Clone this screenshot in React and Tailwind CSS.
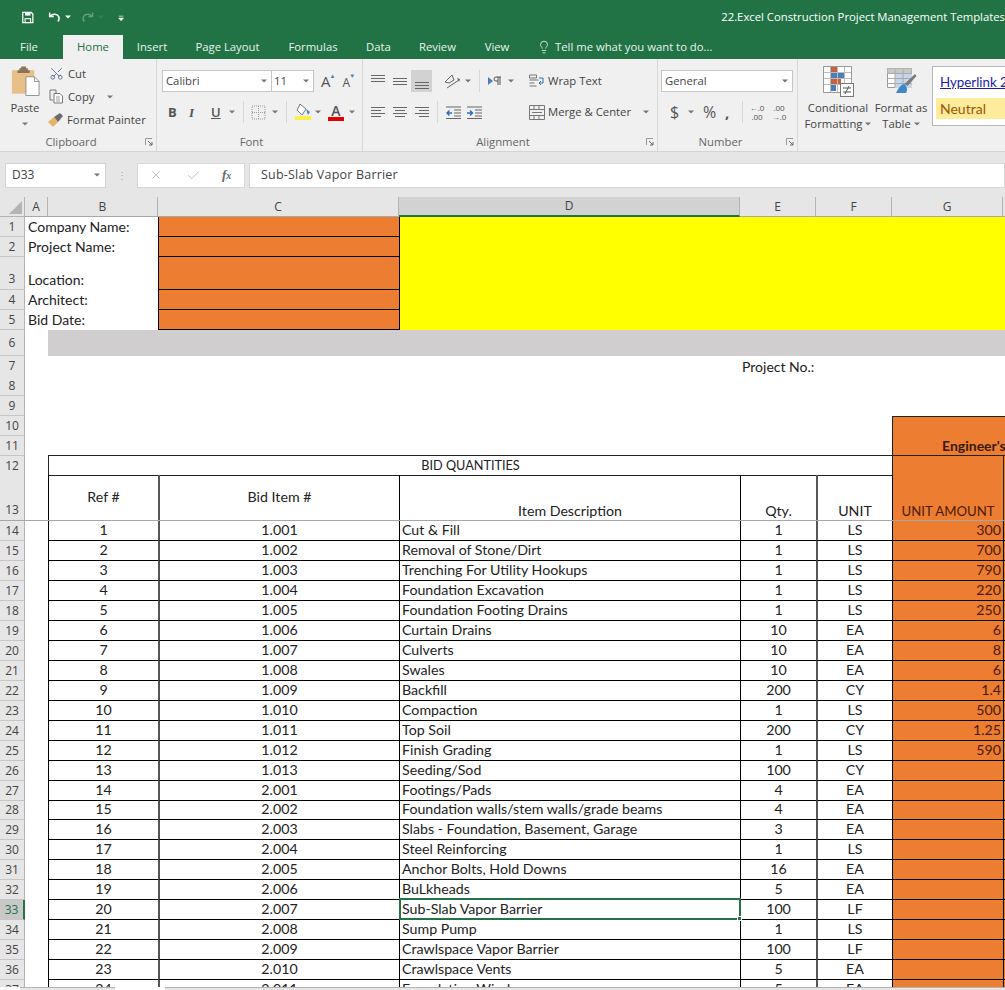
import { Scissors, Lightbulb, X, Check } from 'lucide-react';

const UI = "font-['Open_Sans','Noto_Sans',sans-serif]";
const SHEET = "font-['Lato','Carlito',sans-serif]";
const COLS = 'grid grid-cols-[25px_23px_110px_241px_341px_76px_76px_111px_2px]';

const rows = [
    [1, '1.001', 'Cut & Fill', 1, 'LS', '300'],
    [2, '1.002', 'Removal of Stone/Dirt', 1, 'LS', '700'],
    [3, '1.003', 'Trenching For Utility Hookups', 1, 'LS', '790'],
    [4, '1.004', 'Foundation Excavation', 1, 'LS', '220'],
    [5, '1.005', 'Foundation Footing Drains', 1, 'LS', '250'],
    [6, '1.006', 'Curtain Drains', 10, 'EA', '6'],
    [7, '1.007', 'Culverts', 10, 'EA', '8'],
    [8, '1.008', 'Swales', 10, 'EA', '6'],
    [9, '1.009', 'Backfill', 200, 'CY', '1.4'],
    [10, '1.010', 'Compaction', 1, 'LS', '500'],
    [11, '1.011', 'Top Soil', 200, 'CY', '1.25'],
    [12, '1.012', 'Finish Grading', 1, 'LS', '590'],
    [13, '1.013', 'Seeding/Sod', 100, 'CY', ''],
    [14, '2.001', 'Footings/Pads', 4, 'EA', ''],
    [15, '2.002', 'Foundation walls/stem walls/grade beams', 4, 'EA', ''],
    [16, '2.003', 'Slabs - Foundation, Basement, Garage', 3, 'EA', ''],
    [17, '2.004', 'Steel Reinforcing', 1, 'LS', ''],
    [18, '2.005', 'Anchor Bolts, Hold Downs', 16, 'EA', ''],
    [19, '2.006', 'BuLkheads', 5, 'EA', ''],
    [20, '2.007', 'Sub-Slab Vapor Barrier', 100, 'LF', ''],
    [21, '2.008', 'Sump Pump', 1, 'LS', ''],
    [22, '2.009', 'Crawlspace Vapor Barrier', 100, 'LF', ''],
    [23, '2.010', 'Crawlspace Vents', 5, 'EA', ''],
    [24, '2.011', 'Foundation Windows', 5, 'EA', ''],
];

const Caret = ({ className = '' }) => (
    <svg width="6" height="4" viewBox="0 0 6 4" className={`shrink-0 ${className}`}>
        <path d="M0 0.5h6L3 3.5z" fill="#777" />
    </svg>
);

const Launcher = () => (
    <svg width="8" height="8" viewBox="0 0 8 8" className="absolute right-[3px] bottom-[5px]">
        <path d="M0.5 7V0.5H7" fill="none" stroke="#999" />
        <path d="M3 3l4 4M4 7h3V4" fill="none" stroke="#666" />
    </svg>
);

const Lines = ({ rows: ls }) => (
    <svg width="16" height="14" viewBox="0 0 16 14">
        {ls.map(([x, y, w], i) => <rect key={i} x={x} y={y} width={w} height="1" fill="#666" />)}
    </svg>
);

const Group = ({ label, width, launcher, children, labelPad = 'pr-[14px]' }) => (
    <div className={`relative shrink-0 h-full ${width} border-r border-[#d8d8d8] flex flex-col`}>
        <div className="flex-1 min-h-0">{children}</div>
        <div className={`h-[19px] flex items-center justify-center text-[11.3px] text-[#666] leading-none ${labelPad}`}>{label}</div>
        {launcher && <Launcher />}
    </div>
);

const Sep = ({ className = 'mx-[6px]' }) => <div className={`w-px h-[22px] shrink-0 bg-[#d8d8d8] ${className}`} />;

const Clipboard = () => (
    <Group label="Clipboard" width="w-[157px]" launcher>
        <div className="flex pt-[7px] pl-[9px]">
            <div className="w-[32px] flex flex-col items-center">
                <svg width="30" height="30" viewBox="0 0 32 31">
                    <rect x="2" y="4" width="24" height="25" fill="#e6c088" />
                    <path d="M10 4V2h2V0h5v2h2v2h2v3H8V4z" fill="#8a7356" />
                    <path d="M17 11h9l5 5v15H17z" fill="#fff" stroke="#8d8d8d" />
                    <path d="M26 11v5h5" fill="none" stroke="#8d8d8d" />
                </svg>
                <span className="text-[11.3px] leading-none mt-[6px] text-[#444]">Paste</span>
                <Caret className="mt-[9px]" />
            </div>
            <div className="ml-[8px] flex flex-col text-[#444] text-[11.3px] leading-none gap-[6px] -mt-[1px]">
                <div className="h-[17px] flex items-center gap-[4px]">
                    <Scissors size={15} strokeWidth={1.4} className="text-[#556b8a] -rotate-90" />
                    <span>Cut</span>
                </div>
                <div className="h-[17px] flex items-center gap-[4px]">
                    <svg width="15" height="15" viewBox="0 0 15 15">
                        <path d="M1 1h6v3M1 1v10h3" fill="none" stroke="#777" />
                        <path d="M5 4.5h6l2.5 2.5v7H5z" fill="#fff" stroke="#777" />
                        <path d="M7 8h4M7 10h4M7 12h4" stroke="#999" />
                    </svg>
                    <span>Copy</span>
                    <Caret className="ml-[9px]" />
                </div>
                <div className="h-[17px] flex items-center gap-[3px] -ml-[1px]">
                    <svg width="16" height="15" viewBox="0 0 16 15">
                        <path d="M0 10l6-5 4 5-5 5z" fill="#e6b566" />
                        <path d="M6 5l6-4 3 3-5 6z" fill="#6b6b6b" />
                    </svg>
                    <span>Format Painter</span>
                </div>
            </div>
        </div>
    </Group>
);

const Font = () => (
    <Group label="Font" width="w-[206px]" labelPad="pr-[16px]">
        <div className="flex items-center pt-[11px] pl-[5px]">
            <div className="w-[110px] h-[22px] bg-white border border-[#c6c6c6] flex items-center justify-between pl-[3px] pr-[4px] text-[11.3px] text-[#444]">
                <span>Calibri</span><Caret />
            </div>
            <div className="w-[42px] h-[22px] bg-white border border-l-0 border-[#c6c6c6] flex items-center justify-between pl-[2px] pr-[4px] text-[11.3px] text-[#444]">
                <span>11</span><Caret />
            </div>
            <span className="ml-[7px] text-[15px] text-[#555] relative leading-none">A<span className="absolute -right-[5px] -top-[1px] text-[6px] text-[#4a7ebb]">▲</span></span>
            <span className="ml-[12px] mt-[3px] text-[12px] text-[#555] relative leading-none">A<span className="absolute -right-[5px] -top-[4px] text-[6px] text-[#4a7ebb]">▼</span></span>
        </div>
        <div className="flex items-center pt-[9px] pl-[11px] text-[#555] text-[13px] leading-none">
            <span className="font-bold w-[21px]">B</span>
            <span className="italic font-bold w-[22px] font-['Liberation_Serif',serif]">I</span>
            <span className="underline font-semibold w-[18px]">U</span>
            <Caret />
            <Sep className="ml-[8px] mr-[7px]" />
            <svg width="15" height="15" viewBox="0 0 15 15">
                <path d="M1 1h13v13H1zM7.5 1v13M1 7.5h13" fill="none" stroke="#999" strokeDasharray="1 1" />
            </svg>
            <Caret className="ml-[6px]" />
            <Sep className="ml-[8px] mr-[8px]" />
            <svg width="17" height="18" viewBox="0 0 17 18">
                <path d="M5 1l6 5-4 6-5-5z" fill="#fff" stroke="#777" />
                <path d="M11 6l4 3-2 3z" fill="#4a7ebb" />
                <rect x="0" y="13" width="16" height="4" fill="#f5f04a" />
            </svg>
            <Caret className="ml-[3px]" />
            <div className="ml-[7px] w-[16px] flex flex-col items-center">
                <span className="text-[14px] font-semibold leading-[13px] text-[#555]">A</span>
                <div className="w-[16px] h-[4px] bg-[#e00000]" />
            </div>
            <Caret className="ml-[5px]" />
        </div>
    </Group>
);

const Alignment = () => (
    <Group label="Alignment" width="w-[295px]" launcher>
        <div className="flex pl-[4px] pt-[11px]">
            <div className="w-[162px] flex flex-col">
                <div className="flex items-center h-[22px]">
                    <div className="w-[22px] flex justify-center"><Lines rows={[[1, 1, 14], [1, 4, 14], [1, 7, 14]]} /></div>
                    <div className="w-[22px] flex justify-center"><Lines rows={[[1, 4, 14], [1, 7, 14], [1, 10, 14]]} /></div>
                    <div className="w-[21px] h-[22px] bg-[#d2d2d2] flex justify-center items-end pb-[2px]"><Lines rows={[[1, 6, 14], [1, 9, 14], [1, 12, 14]]} /></div>
                    <svg width="18" height="16" viewBox="0 0 18 16" className="ml-[12px]">
                        <path d="M1 9l7-7 2 5-5 3zM3 15l12-8" fill="none" stroke="#666" />
                        <path d="M13 5l3 1-1 3z" fill="#666" />
                    </svg>
                    <Caret className="ml-[3px]" />
                    <Sep className="ml-[8px] mr-[8px]" />
                    <svg width="14" height="10" viewBox="0 0 14 10">
                        <path d="M0 1l5 4-5 4z" fill="#4a7ebb" />
                        <path d="M8 1h5M10 1v8M12 1v8M8 1a2 2 0 0 0 0 4h2" fill="none" stroke="#555" />
                    </svg>
                    <Caret className="ml-[6px]" />
                </div>
                <div className="flex items-center h-[22px] mt-[9px]">
                    <div className="w-[22px] flex justify-center"><Lines rows={[[1, 2, 14], [1, 5, 10], [1, 8, 14], [1, 11, 10]]} /></div>
                    <div className="w-[22px] flex justify-center"><Lines rows={[[1, 2, 14], [3, 5, 10], [1, 8, 14], [3, 11, 10]]} /></div>
                    <div className="w-[21px] flex justify-center"><Lines rows={[[1, 2, 14], [5, 5, 10], [1, 8, 14], [5, 11, 10]]} /></div>
                    <Sep className="ml-[5px] mr-[7px]" />
                    <svg width="17" height="13" viewBox="0 0 17 13">
                        <path d="M1 1h15M9 4h7M9 7h7M9 10h7M1 12.5h15" stroke="#666" />
                        <path d="M7 7H2M4.5 4.5L2 7l2.5 2.5" fill="none" stroke="#2f6fb3" strokeWidth="1.4" />
                    </svg>
                    <svg width="17" height="13" viewBox="0 0 17 13" className="ml-[4px]">
                        <path d="M1 1h15M9 4h7M9 7h7M9 10h7M1 12.5h15" stroke="#666" />
                        <path d="M1 7h5M4 4.5L6.5 7 4 9.5" fill="none" stroke="#2f6fb3" strokeWidth="1.4" />
                    </svg>
                </div>
            </div>
            <div className="flex flex-col text-[11.3px] text-[#444] leading-none">
                <div className="flex items-center h-[22px] gap-[3px]">
                    <svg width="16" height="15" viewBox="0 0 16 15">
                        <path d="M0.5 1h7v3h-7zM0.5 6h9M0.5 9h5M0.5 12h7" fill="none" stroke="#777" />
                        <path d="M10 4h4v5h-4M12 7l-2 2 2 2" fill="none" stroke="#2f6fb3" />
                    </svg>
                    <span>Wrap Text</span>
                </div>
                <div className="flex items-center h-[22px] mt-[9px] gap-[3px]">
                    <svg width="16" height="15" viewBox="0 0 16 15">
                        <path d="M0.5 0.5h15v14H0.5zM0.5 4.5h15M0.5 10.5h15M5 0.5v4M10 0.5v4M5 10.5v4M10 10.5v4" fill="none" stroke="#777" />
                        <path d="M3 7.5h10" stroke="#777" />
                    </svg>
                    <span>Merge &amp; Center</span>
                    <Caret className="ml-[9px]" />
                </div>
            </div>
        </div>
    </Group>
);

const NumberGroup = () => (
    <Group label="Number" width="w-[140px]" launcher>
        <div className="pt-[11px] pl-[3px]">
            <div className="w-[132px] h-[22px] bg-white border border-[#c6c6c6] flex items-center justify-between pl-[3px] pr-[4px] text-[11.3px] text-[#444]">
                <span>General</span><Caret />
            </div>
            <div className="flex items-center h-[22px] mt-[9px] pl-[9px] text-[#555] leading-none">
                <span className="text-[16px] w-[18px]">$</span>
                <Caret />
                <span className="text-[16px] ml-[9px] w-[22px]">%</span>
                <span className="text-[15px] font-bold w-[17px]">,</span>
                <Sep className="mr-[6px]" />
                <span className="text-[8px] leading-[9px] text-center w-[16px]"><span className="text-[#2f6fb3]">←</span>.0<br />.00</span>
                <span className="text-[8px] leading-[9px] text-center w-[16px] ml-[6px]">.00<br /><span className="text-[#2f6fb3]">→</span>.0</span>
            </div>
        </div>
    </Group>
);

const Styles = () => (
    <div className="relative flex-1 h-full flex pl-[5px] text-[11.3px] text-[#444] leading-none">
        <div className="w-[70px] flex flex-col items-center pt-[7px]">
            <svg width="31" height="31" viewBox="0 0 31 31">
                <path d="M0.5 0.5h28v26H0.5z" fill="#fff" stroke="#999" />
                <rect x="8" y="1" width="7" height="5" fill="#c9603c" />
                <rect x="8" y="7" width="13" height="5" fill="#4a7ebb" />
                <rect x="8" y="13" width="10" height="5" fill="#c9603c" />
                <rect x="8" y="19" width="5" height="6" fill="#4a7ebb" />
                <path d="M7.5 1v25M14.5 1v25M21.5 1v25M1 6.5h27M1 12.5h27M1 18.5h27" stroke="#bbb" fill="none" />
                <rect x="17.5" y="17.5" width="13" height="13" fill="#fff" stroke="#777" />
                <path d="M20 22h8M20 26h8M26 20l-4 8" stroke="#555" fill="none" />
            </svg>
            <span className="mt-[3px] h-[16px] flex items-center">Conditional</span>
            <span className="h-[16px] flex items-center gap-[3px]">Formatting<Caret /></span>
        </div>
        <div className="w-[56px] flex flex-col items-center pt-[7px]">
            <svg width="31" height="31" viewBox="0 0 31 31">
                <path d="M1.5 2.5h24v19h-24z" fill="#fff" stroke="#999" />
                <path d="M1.5 2.5h24v5h-24z" fill="#c8c8c8" />
                <path d="M9 8h17v14H9z" fill="#c6d5ea" />
                <path d="M1.5 7.5h24M1.5 12.5h24M1.5 17.5h24M9 2.5v19M17 2.5v19" stroke="#aaa" fill="none" />
                <path d="M29 8l1.5 2-9 10-3-2z" fill="#7a7a7a" />
                <path d="M18 18c-4 1-6 5-8 9h10c2-3 1-7-2-9z" fill="#3f88c5" />
            </svg>
            <span className="mt-[3px] h-[16px] flex items-center">Format as</span>
            <span className="h-[16px] flex items-center gap-[3px]">Table<Caret /></span>
        </div>
        <div className="mt-[7px] ml-[3px] w-[80px] h-[60px] bg-white border border-[#b8b8b8] overflow-hidden whitespace-nowrap">
            <div className={`h-[31px] pl-[7px] flex items-center text-[13.3px] text-[#1c1ca8] underline ${SHEET}`}>Hyperlink 2</div>
            <div className={`mx-[3px] h-[21px] pl-[4px] flex items-center bg-[#ffeb9c] text-[#9c5700] text-[14px] ${SHEET}`}>Neutral</div>
        </div>
    </div>
);

const TitleBar = () => (
    <div className={`h-[59px] bg-[#217346] text-white flex flex-col shrink-0 ${UI}`}>
        <div className="h-[35px] flex items-center pl-[22px] pb-[1px] whitespace-nowrap overflow-hidden">
            <svg width="15" height="15" viewBox="0 0 15 15">
                <path d="M1 1h11l2 2v11H1z" fill="none" stroke="#fff" strokeWidth="1.6" />
                <rect x="4" y="1" width="7" height="4" fill="#fff" />
                <rect x="4" y="9" width="7" height="5" fill="none" stroke="#fff" strokeWidth="1.4" />
            </svg>
            <svg width="17" height="14" viewBox="0 0 16 13" className="ml-[14px]">
                <path d="M2 1v5h5" fill="none" stroke="#fff" strokeWidth="1.8" />
                <path d="M2.5 5.5C6 2 11 2.5 13 6c1 2 .5 4-1 6" fill="none" stroke="#fff" strokeWidth="1.8" />
            </svg>
            <Caret className="ml-[4px] brightness-[3]" />
            <svg width="17" height="14" viewBox="0 0 16 13" className="ml-[10px] opacity-30">
                <path d="M14 1v5H9" fill="none" stroke="#fff" strokeWidth="1.8" />
                <path d="M13.5 5.5C10 2 5 2.5 3 6c-1 2-.5 4 1 6" fill="none" stroke="#fff" strokeWidth="1.8" />
            </svg>
            <Caret className="ml-[4px] opacity-40" />
            <svg width="8" height="7" viewBox="0 0 8 7" className="ml-[14px] mt-[2px]">
                <path d="M1 0.5h6M1 3h6L4 6.5z" fill="#fff" stroke="#fff" strokeWidth="0.8" />
            </svg>
            <span className="ml-[597px] text-[11.3px]">22.Excel Construction Project Management Templates</span>
        </div>
        <div className="h-[24px] flex text-[11.3px] text-[#e8f2ec] leading-none whitespace-nowrap pb-[1px]">
            <div className="w-[63px] pr-[5px] flex items-center justify-center">File</div>
            <div className="w-[60px] -mb-[1px] bg-[#f0f0f0] text-[#217346] flex items-center justify-center pb-[1px]">Home</div>
            <div className="w-[58px] flex items-center justify-center">Insert</div>
            <div className="w-[93px] flex items-center justify-center">Page Layout</div>
            <div className="w-[78px] flex items-center justify-center">Formulas</div>
            <div className="w-[53px] flex items-center justify-center">Data</div>
            <div className="w-[65px] flex items-center justify-center">Review</div>
            <div className="w-[54px] flex items-center justify-center">View</div>
            <div className="ml-[13px] flex items-center gap-[4px]">
                <Lightbulb size={14} strokeWidth={1.4} />
                <span>Tell me what you want to do...</span>
            </div>
        </div>
    </div>
);

const FormulaBar = () => (
    <div className={`h-[46px] bg-[#e6e6e6] border-t border-[#d4d4d4] flex items-center pl-[5px] pt-[1px] shrink-0 ${UI}`}>
        <div className="w-[101px] h-[25px] bg-white border border-[#d4d4d4] flex items-center justify-between pl-[6px] pr-[5px] text-[12px] text-[#444]">
            <span>D33</span><Caret />
        </div>
        <div className="w-[31px] flex justify-center text-[#a8a8a8] text-[10px] leading-[4px]">⋮</div>
        <div className="w-[108px] h-[25px] bg-white border border-[#d8d8d8] flex items-center pl-[11px] text-[#bbb]">
            <X size={14} strokeWidth={1.5} />
            <Check size={15} strokeWidth={1.5} className="ml-[23px]" />
            <span className="ml-[21px] text-[13px] italic font-bold text-[#666] font-['Liberation_Serif',serif]">f<span className="text-[10px]">x</span></span>
        </div>
        <div className="ml-[4px] flex-1 h-[25px] bg-white border border-[#d8d8d8] flex items-center pl-[11px] text-[12.5px] tracking-[0.2px] text-[#444]">
            Sub-Slab Vapor Barrier
        </div>
    </div>
);

const ColHead = ({ children, active }) => (
    <div className={`h-[20px] flex items-center justify-center border-r border-[#b4b4b4] border-b text-[12px] text-[#444] ${active ? 'bg-[#d2d2d2] border-b-2 border-b-[#217346]' : 'border-b-[#a8a8a8]'}`}>{children}</div>
);

const ColumnHeaders = () => (
    <div className={`${COLS} bg-[#e6e6e6] ${UI}`}>
        <div className="h-[20px] border-r border-b border-[#b4b4b4] flex items-end justify-end pr-[2px] pb-[2px]">
            <svg width="13" height="13" viewBox="0 0 13 13"><path d="M13 0v13H0z" fill="#b4b4b4" /></svg>
        </div>
        <ColHead>A</ColHead>
        <ColHead>B</ColHead>
        <ColHead>C</ColHead>
        <ColHead active>D</ColHead>
        <ColHead>E</ColHead>
        <ColHead>F</ColHead>
        <ColHead>G</ColHead>
        <div className="h-[20px] border-b border-[#a8a8a8]" />
    </div>
);

const RowHead = ({ n, end, active, className = '' }) => (
    <div className={`flex justify-center ${end ? 'items-end' : 'items-center'} text-[12px] leading-none border-b border-[#c6c6c6] border-r ${active ? 'bg-[#c8c8c8] border-r-2 border-r-[#217346] text-[#217346]' : 'bg-[#e6e6e6] border-r-[#b4b4b4] text-[#444]'} ${UI} ${className}`}>
        {end ? <span className="mb-[4px]">{n}</span> : n}
    </div>
);

// rows 1-5, the yellow block is one merged cell
const CompanyBlock = () => {
    const info = ['Company Name:', 'Project Name:', 'Location:', 'Architect:', 'Bid Date:'];
    return (
        <div className={`${COLS} grid-rows-[20px_20px_33px_20px_20px]`}>
            {info.map((label, i) => (
                <div key={label} className="contents">
                    <RowHead n={i + 1} end={i === 2} />
                    <div className="col-span-2 pl-[3px] flex items-end leading-[20px] text-[14px] text-[#222]">{label}</div>
                    <div className="bg-[#ed7d31] border-l border-b border-black" />
                    {i === 0 && <div className="col-span-5 row-span-5 bg-[#ffff00] border-l border-black" />}
                </div>
            ))}
        </div>
    );
};

const Blank = ({ n, h = 'h-[20px]', children }) => (
    <div className={`${COLS} ${h}`}>
        <RowHead n={n} />
        {children}
    </div>
);

const TopRows = () => (
    <>
        <Blank n={6} h="h-[26px]">
            <div />
            <div className="col-span-7 bg-[#d0cece]" />
        </Blank>
        <Blank n={7}>
            <div className="col-start-6 col-span-2 pl-[2px] flex items-center text-[14px] text-[#222] whitespace-nowrap">Project No.:</div>
        </Blank>
        <Blank n={8} />
        <Blank n={9} />
        <Blank n={10}>
            <div className="col-start-8 col-span-2 bg-[#ed7d31] border-l border-t border-[#222]" />
        </Blank>
        <Blank n={11}>
            <div />
            <div className="col-span-5 border-b border-[#222]" />
            <div className="col-span-2 bg-[#ed7d31] border-l border-b border-[#222] overflow-hidden whitespace-nowrap pl-[49px] flex items-center text-[14px] font-bold text-[#3a1a08]">Engineer's</div>
        </Blank>
        <Blank n={12} h="h-[19px]">
            <div />
            <div className="col-span-5 border-l border-b border-[#222] flex items-center justify-center text-[12.7px] text-[#222]">BID QUANTITIES</div>
            <div className="bg-[#ed7d31] border-l border-[#222]" />
            <div className="bg-[#ed7d31] border-l border-[#222]" />
        </Blank>
        <div className={`${COLS} h-[46px] border-b border-[#a6a6a6] text-[14.2px] leading-[18px] text-[#222]`}>
            <RowHead n={13} end className="border-b-0" />
            <div />
            <div className="border-l border-black flex items-center justify-center pb-[1px]">Ref #</div>
            <div className="border-l-2 border-[#555] flex items-center justify-center pb-[1px]">Bid Item #</div>
            <div className="border-l border-black flex items-end justify-center">Item Description</div>
            <div className="border-l border-black flex items-end justify-center">Qty.</div>
            <div className="border-l-2 border-[#555] flex items-end justify-center">UNIT</div>
            <div className="bg-[#ed7d31] border-l border-black flex items-end justify-center text-[13.2px] text-[#4a1c06] whitespace-nowrap">UNIT AMOUNT</div>
            <div className="bg-[#ed7d31] border-l border-[#222]" />
        </div>
    </>
);

const BidRow = ({ row, index }) => {
    const [ref, item, desc, qty, unit, amount] = row;
    const n = index + 14;
    const selected = n === 33;
    return (
        <div className={`${COLS} ${n === 28 ? 'h-[19px]' : 'h-[20px]'} shrink-0 text-[14.2px] leading-none text-[#222]`}>
            <RowHead n={n} active={selected} />
            <div />
            <div className="border-l border-b border-black flex items-center justify-center pb-px">{ref}</div>
            <div className="border-l-2 border-b border-[#555] border-b-black flex items-center justify-center pb-px">{item}</div>
            <div className="relative border-l border-b border-black flex items-center pl-[2px] pb-px">
                {desc}
                {selected && (
                    <div className="absolute -left-px -top-[2px] -right-[1px] -bottom-[1px] border-2 border-[#217346]">
                        <div className="absolute -right-[3px] -bottom-[3px] w-[5px] h-[5px] bg-[#217346] border border-white" />
                    </div>
                )}
            </div>
            <div className="border-l border-b border-black flex items-center justify-center pb-px">{qty}</div>
            <div className="border-l-2 border-b border-[#555] border-b-black flex items-center justify-center pb-px">{unit}</div>
            <div className="bg-[#ed7d31] border-l border-b border-black flex items-center justify-end pr-[2px] pb-px text-[#4a1c06]">{amount}</div>
            <div className="bg-[#ed7d31] border-l border-b border-black" />
        </div>
    );
};

export default function App() {
    return (
        <div className="w-[1005px] h-[990px] overflow-hidden flex flex-col bg-white">
            <TitleBar />
            <div className={`h-[92px] bg-[#f0f0f0] flex shrink-0 overflow-hidden whitespace-nowrap ${UI}`}>
                <Clipboard />
                <Font />
                <Alignment />
                <NumberGroup />
                <Styles />
            </div>
            <FormulaBar />
            <div className={`flex-1 min-h-0 overflow-hidden ${SHEET}`}>
                <ColumnHeaders />
                <CompanyBlock />
                <TopRows />
                {rows.map((row, i) => <BidRow key={row[0]} row={row} index={i} />)}
            </div>
            <div className="h-[3px] shrink-0 flex bg-white">
                <div className="w-[95px] ml-[20px] bg-[#e6e6e6] border-t border-[#b4b4b4]" />
                <div className="flex-1 ml-[50px] bg-[#e6e6e6] border-t border-[#b4b4b4]" />
            </div>
        </div>
    );
}
